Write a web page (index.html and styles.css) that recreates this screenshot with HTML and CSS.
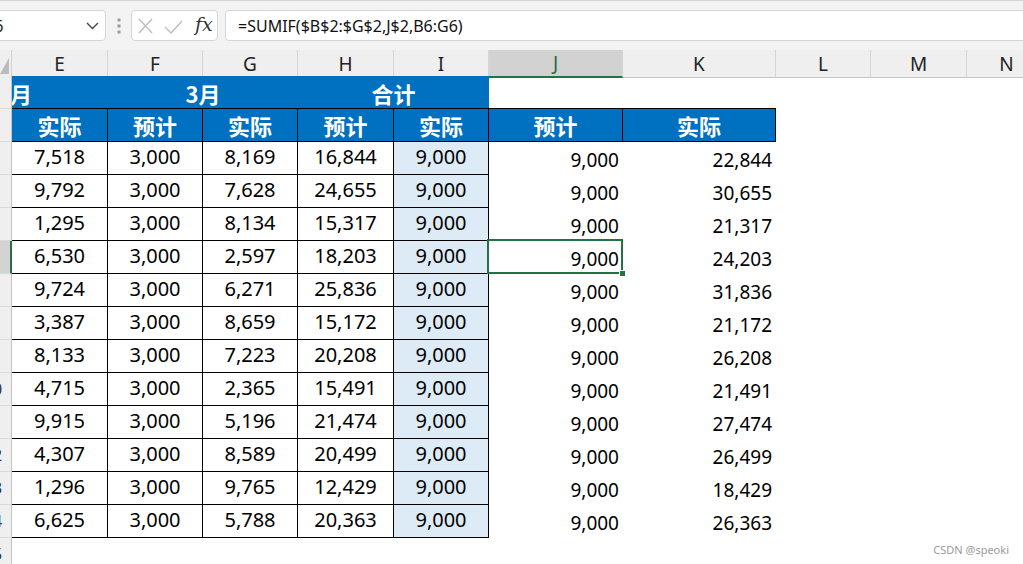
FILE: index.html
```html
<!DOCTYPE html>
<html lang="zh">
<head>
<meta charset="utf-8">
<title>SUMIF</title>
<link rel="stylesheet" href="styles.css">
</head>
<body>
<div class="toolbar">
  <div class="namebox">
    <span class="nb-text">J6</span>
    <svg class="chev" width="13" height="8" viewBox="0 0 13 8"><polyline points="1,1 6.5,6.5 12,1" fill="none" stroke="#444" stroke-width="1.4"/></svg>
  </div>
  <svg class="dots" width="4" height="16" viewBox="0 0 4 16"><rect x="0.5" y="0.5" width="3" height="3" fill="#9c9c9c"/><rect x="0.5" y="6.5" width="3" height="3" fill="#9c9c9c"/><rect x="0.5" y="12.5" width="3" height="3" fill="#9c9c9c"/></svg>
  <div class="fxbox">
    <svg class="ico-x" width="15" height="16" viewBox="0 0 15 16"><path d="M1 1 L14 15 M14 1 L1 15" stroke="#bdbdbd" stroke-width="1.4" fill="none"/></svg>
    <svg class="ico-ok" width="19" height="14" viewBox="0 0 19 14"><polyline points="1,7 7,13 18,1" fill="none" stroke="#bdbdbd" stroke-width="1.4"/></svg>
    <span class="fx">fx</span>
  </div>
  <div class="formula">=SUMIF($B$2:$G$2,J$2,B6:G6)</div>
</div>

<div class="sheet">
  <div class="row colhead">
    <div class="corner"><svg width="9" height="16" viewBox="0 0 9 16"><polygon points="9,0 9,16 0,16" fill="#bcbcbc"/></svg></div>
    <div class="ch">E</div><div class="ch">F</div><div class="ch">G</div><div class="ch">H</div><div class="ch">I</div>
    <div class="ch ch-sel">J</div><div class="ch">K</div><div class="ch">L</div><div class="ch">M</div><div class="ch">N</div>
  </div>

  <div class="row">
    <div class="rh"><span>1</span></div>
    <div class="ttl ttl-e"><span class="cut">2月</span></div>
    <div class="ttl span2">3月</div>
    <div class="ttl span2">合计</div>
    <div class="tb"></div><div class="tb"></div>
  </div>

  <div class="row">
    <div class="rh"><span>2</span></div>
    <div class="hd">实际</div><div class="hd">预计</div><div class="hd">实际</div><div class="hd">预计</div><div class="hd">实际</div>
    <div class="hd">预计</div><div class="hd">实际</div>
  </div>

  <div class="row">
    <div class="rh"><span>3</span></div>
    <div class="d">7,518</div><div class="d">3,000</div><div class="d">8,169</div><div class="d">16,844</div><div class="d hl">9,000</div>
    <div class="v">9,000</div><div class="v">22,844</div>
  </div>
  <div class="row">
    <div class="rh"><span>4</span></div>
    <div class="d">9,792</div><div class="d">3,000</div><div class="d">7,628</div><div class="d">24,655</div><div class="d hl">9,000</div>
    <div class="v">9,000</div><div class="v">30,655</div>
  </div>
  <div class="row">
    <div class="rh"><span>5</span></div>
    <div class="d">1,295</div><div class="d">3,000</div><div class="d">8,134</div><div class="d">15,317</div><div class="d hl">9,000</div>
    <div class="v">9,000</div><div class="v">21,317</div>
  </div>
  <div class="row">
    <div class="rh rh-sel"><span>6</span></div>
    <div class="d">6,530</div><div class="d">3,000</div><div class="d">2,597</div><div class="d">18,203</div><div class="d hl">9,000</div>
    <div class="v active">9,000<div class="selbox"><div class="handle"></div></div></div><div class="v">24,203</div>
  </div>
  <div class="row">
    <div class="rh"><span>7</span></div>
    <div class="d">9,724</div><div class="d">3,000</div><div class="d">6,271</div><div class="d">25,836</div><div class="d hl">9,000</div>
    <div class="v">9,000</div><div class="v">31,836</div>
  </div>
  <div class="row">
    <div class="rh"><span>8</span></div>
    <div class="d">3,387</div><div class="d">3,000</div><div class="d">8,659</div><div class="d">15,172</div><div class="d hl">9,000</div>
    <div class="v">9,000</div><div class="v">21,172</div>
  </div>
  <div class="row">
    <div class="rh"><span>9</span></div>
    <div class="d">8,133</div><div class="d">3,000</div><div class="d">7,223</div><div class="d">20,208</div><div class="d hl">9,000</div>
    <div class="v">9,000</div><div class="v">26,208</div>
  </div>
  <div class="row">
    <div class="rh"><span>10</span></div>
    <div class="d">4,715</div><div class="d">3,000</div><div class="d">2,365</div><div class="d">15,491</div><div class="d hl">9,000</div>
    <div class="v">9,000</div><div class="v">21,491</div>
  </div>
  <div class="row">
    <div class="rh"><span>11</span></div>
    <div class="d">9,915</div><div class="d">3,000</div><div class="d">5,196</div><div class="d">21,474</div><div class="d hl">9,000</div>
    <div class="v">9,000</div><div class="v">27,474</div>
  </div>
  <div class="row">
    <div class="rh"><span>12</span></div>
    <div class="d">4,307</div><div class="d">3,000</div><div class="d">8,589</div><div class="d">20,499</div><div class="d hl">9,000</div>
    <div class="v">9,000</div><div class="v">26,499</div>
  </div>
  <div class="row">
    <div class="rh"><span>13</span></div>
    <div class="d">1,296</div><div class="d">3,000</div><div class="d">9,765</div><div class="d">12,429</div><div class="d hl">9,000</div>
    <div class="v">9,000</div><div class="v">18,429</div>
  </div>
  <div class="row">
    <div class="rh"><span>14</span></div>
    <div class="d">6,625</div><div class="d">3,000</div><div class="d">5,788</div><div class="d">20,363</div><div class="d hl">9,000</div>
    <div class="v">9,000</div><div class="v">26,363</div>
  </div>
  <div class="row">
    <div class="rh"><span>15</span></div>
  </div>
</div>

<div class="watermark">CSDN @speoki</div>
</body>
</html>
```

FILE: styles.css
```css
* { box-sizing: border-box; }
html, body { margin: 0; padding: 0; }
body {
  width: 1023px;
  height: 564px;
  overflow: hidden;
  position: relative;
  background: #fff;
  color: #000;
  font-family: "Noto Sans", "Noto Sans CJK SC", sans-serif;
}

/* ---------- formula bar ---------- */
.toolbar {
  height: 50px;
  border-top: 1px solid #d4d4d4;
  background: #f3f3f3;
  padding-top: 9px;
  display: flex;
  align-items: flex-start;
  font-size: 16px;
}
.namebox {
  flex: none;
  margin-left: -17px;
  width: 123px;
  height: 31px;
  background: #fff;
  border: 1px solid #d6d6d6;
  border-radius: 4px;
  display: flex;
  align-items: center;
  justify-content: space-between;
  padding: 0 6px 0 6px;
}
.nb-text { color: #222; }
.dots { flex: none; margin: 8px 0 0 11px; }
.fxbox {
  flex: none;
  margin-left: 10px;
  width: 87px;
  height: 31px;
  background: #fff;
  border: 1px solid #d6d6d6;
  border-radius: 4px;
  display: flex;
  align-items: center;
  padding-left: 6px;
}
.ico-x { flex: none; margin-top: 1px; }
.ico-ok { flex: none; margin-left: 11px; margin-top: 3px; }
.fx {
  margin-left: 12px;
  font-family: "DejaVu Serif", "Liberation Serif", serif;
  font-style: italic;
  font-size: 19px;
  color: #333;
  line-height: 1;
  margin-top: -2px;
}
.formula {
  flex: 1;
  margin-left: 7px;
  margin-right: -10px;
  height: 31px;
  background: #fff;
  border: 1px solid #d6d6d6;
  border-radius: 4px;
  display: flex;
  align-items: center;
  padding-left: 12px;
  color: #111;
}

/* ---------- sheet ---------- */
.row {
  display: grid;
  grid-template-columns: 12px 96px 95px 95px 96px 95px 134px 153px 95px 96px 80px;
  height: 33px;
}
.colhead { height: 26px; }
.corner {
  background: #efefef;
  border-right: 1px solid #d0d0d0;
  border-bottom: 1px solid #c6c6c6;
  display: flex;
  align-items: flex-end;
  padding-bottom: 3px;
}
.corner svg { display: block; }
.ch {
  background: #efefef;
  border-right: 1px solid #d5d5d5;
  border-bottom: 1px solid #c6c6c6;
  display: flex;
  align-items: center;
  justify-content: center;
  font-size: 19px;
  color: #222;
}
.ch-sel {
  background: #d2d2d2;
  border-bottom: 2px solid #217346;
  color: #1e6b41;
}

.rh {
  background: #efefef;
  border-right: 1px solid #c4c4c4;
  border-bottom: 1px solid #dadada;
  overflow: hidden;
  display: flex;
  align-items: center;
  font-size: 16px;
  color: #333;
}
.rh span {
  flex: none;
  width: 36px;
  margin-left: -25px;
  text-align: center;
}
.rh-sel {
  background: #d3d3d3;
  border-right: 2px solid #217346;
}
.rh-sel span { margin-left: -26px; }

.ttl {
  background: #0070c0;
  color: #fff;
  font-family: "Noto Sans CJK SC", sans-serif;
  font-weight: 700;
  font-size: 22px;
  border-bottom: 1px solid #000;
  display: flex;
  align-items: center;
  justify-content: center;
  padding-top: 2px;
  overflow: hidden;
  white-space: nowrap;
}
.ttl-e { justify-content: flex-start; }
.cut { flex: none; margin-left: -15px; }
.span2 { grid-column: span 2; }
.tb { border-bottom: 1px solid #000; }

.hd {
  background: #0070c0;
  color: #fff;
  font-family: "Noto Sans CJK SC", sans-serif;
  font-weight: 700;
  font-size: 22px;
  border-right: 1px solid #000;
  border-bottom: 1px solid #000;
  display: flex;
  align-items: center;
  justify-content: center;
}

.d {
  border-right: 1px solid #000;
  border-bottom: 1px solid #000;
  display: flex;
  align-items: center;
  justify-content: center;
  font-size: 20px;
  padding-bottom: 4px;
}
.d.hl { background: #ddebf7; }

.v {
  display: flex;
  justify-content: flex-end;
  align-items: flex-end;
  padding: 0 4px 5px 0;
  font-size: 19px;
  line-height: 19px;
}
.v.active { position: relative; }
.selbox {
  position: absolute;
  left: -2px;
  top: -2px;
  width: 136px;
  height: 35px;
  border: 2px solid #217346;
}
.handle {
  position: absolute;
  right: -5px;
  bottom: -5px;
  width: 7px;
  height: 7px;
  background: #217346;
  border: 1px solid #fff;
}

.watermark {
  position: absolute;
  right: 14px;
  bottom: 7px;
  font-size: 11px;
  color: #9a9a9a;
}
```
